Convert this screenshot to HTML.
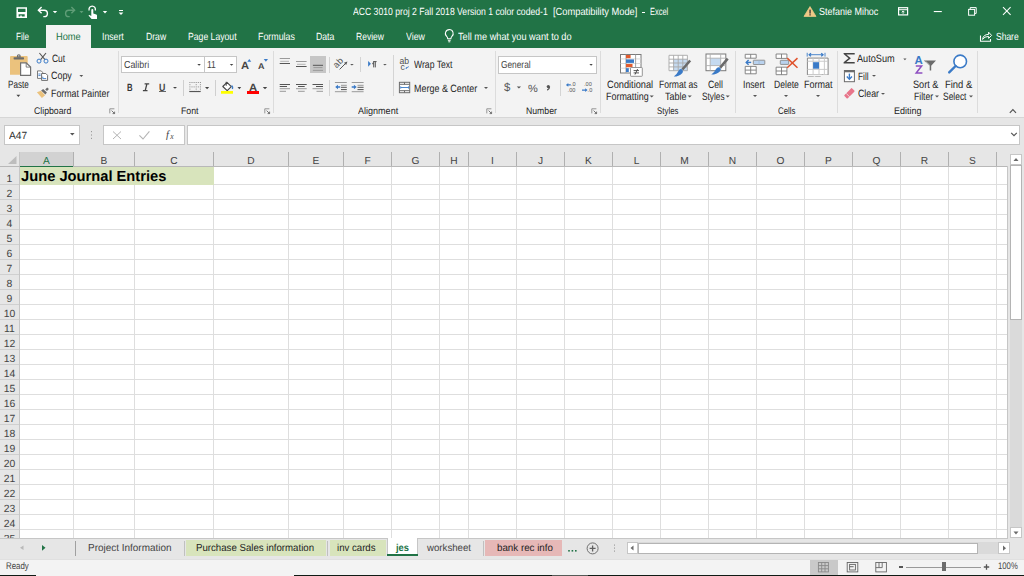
<!DOCTYPE html><html><head><meta charset="utf-8"><style>
html,body{margin:0;padding:0;width:1024px;height:576px;overflow:hidden;background:#e6e6e6;position:relative}
.t{position:absolute;white-space:nowrap;font-family:"Liberation Sans", sans-serif;transform-origin:0 0;text-rendering:geometricPrecision}
</style></head><body>
<div style="position:absolute;left:0px;top:0px;width:1024px;height:48px;background:#217346"></div>
<div style="position:absolute;left:46px;top:25px;width:45px;height:23px;background:#f3f3f3"></div>
<div style="position:absolute;left:0px;top:48px;width:1024px;height:69px;background:#f3f3f3"></div>
<div style="position:absolute;left:0px;top:117px;width:1024px;height:1px;background:#d6d6d6"></div>
<div style="position:absolute;left:0px;top:118px;width:1024px;height:34px;background:#e6e6e6"></div>
<div style="position:absolute;left:642px;top:12px;width:3px;height:1px;background:#fff"></div>
<div style="position:absolute;left:4px;top:125px;width:76px;height:20px;background:#fff;box-sizing:border-box;border:1px solid #c6c6c6"></div>
<div style="position:absolute;left:103px;top:125px;width:82px;height:20px;background:#fff;box-sizing:border-box;border:1px solid #c6c6c6"></div>
<div style="position:absolute;left:187px;top:125px;width:833px;height:20px;background:#fff;box-sizing:border-box;border:1px solid #c6c6c6"></div>
<div style="position:absolute;left:20px;top:167px;width:988px;height:371px;background:#fff"></div>
<div style="position:absolute;left:73px;top:167px;width:1px;height:371px;background:#dedede"></div>
<div style="position:absolute;left:134px;top:167px;width:1px;height:371px;background:#dedede"></div>
<div style="position:absolute;left:213px;top:167px;width:1px;height:371px;background:#dedede"></div>
<div style="position:absolute;left:288px;top:167px;width:1px;height:371px;background:#dedede"></div>
<div style="position:absolute;left:343px;top:167px;width:1px;height:371px;background:#dedede"></div>
<div style="position:absolute;left:391px;top:167px;width:1px;height:371px;background:#dedede"></div>
<div style="position:absolute;left:439px;top:167px;width:1px;height:371px;background:#dedede"></div>
<div style="position:absolute;left:468px;top:167px;width:1px;height:371px;background:#dedede"></div>
<div style="position:absolute;left:516px;top:167px;width:1px;height:371px;background:#dedede"></div>
<div style="position:absolute;left:564px;top:167px;width:1px;height:371px;background:#dedede"></div>
<div style="position:absolute;left:612px;top:167px;width:1px;height:371px;background:#dedede"></div>
<div style="position:absolute;left:660px;top:167px;width:1px;height:371px;background:#dedede"></div>
<div style="position:absolute;left:708px;top:167px;width:1px;height:371px;background:#dedede"></div>
<div style="position:absolute;left:756px;top:167px;width:1px;height:371px;background:#dedede"></div>
<div style="position:absolute;left:804px;top:167px;width:1px;height:371px;background:#dedede"></div>
<div style="position:absolute;left:852px;top:167px;width:1px;height:371px;background:#dedede"></div>
<div style="position:absolute;left:900px;top:167px;width:1px;height:371px;background:#dedede"></div>
<div style="position:absolute;left:948px;top:167px;width:1px;height:371px;background:#dedede"></div>
<div style="position:absolute;left:996px;top:167px;width:1px;height:371px;background:#dedede"></div>
<div style="position:absolute;left:20px;top:184px;width:988px;height:1px;background:#dedede"></div>
<div style="position:absolute;left:0px;top:184px;width:19px;height:1px;background:#d0d0d0"></div>
<div style="position:absolute;left:20px;top:199px;width:988px;height:1px;background:#dedede"></div>
<div style="position:absolute;left:0px;top:199px;width:19px;height:1px;background:#d0d0d0"></div>
<div style="position:absolute;left:20px;top:214px;width:988px;height:1px;background:#dedede"></div>
<div style="position:absolute;left:0px;top:214px;width:19px;height:1px;background:#d0d0d0"></div>
<div style="position:absolute;left:20px;top:229px;width:988px;height:1px;background:#dedede"></div>
<div style="position:absolute;left:0px;top:229px;width:19px;height:1px;background:#d0d0d0"></div>
<div style="position:absolute;left:20px;top:244px;width:988px;height:1px;background:#dedede"></div>
<div style="position:absolute;left:0px;top:244px;width:19px;height:1px;background:#d0d0d0"></div>
<div style="position:absolute;left:20px;top:259px;width:988px;height:1px;background:#dedede"></div>
<div style="position:absolute;left:0px;top:259px;width:19px;height:1px;background:#d0d0d0"></div>
<div style="position:absolute;left:20px;top:274px;width:988px;height:1px;background:#dedede"></div>
<div style="position:absolute;left:0px;top:274px;width:19px;height:1px;background:#d0d0d0"></div>
<div style="position:absolute;left:20px;top:289px;width:988px;height:1px;background:#dedede"></div>
<div style="position:absolute;left:0px;top:289px;width:19px;height:1px;background:#d0d0d0"></div>
<div style="position:absolute;left:20px;top:304px;width:988px;height:1px;background:#dedede"></div>
<div style="position:absolute;left:0px;top:304px;width:19px;height:1px;background:#d0d0d0"></div>
<div style="position:absolute;left:20px;top:319px;width:988px;height:1px;background:#dedede"></div>
<div style="position:absolute;left:0px;top:319px;width:19px;height:1px;background:#d0d0d0"></div>
<div style="position:absolute;left:20px;top:334px;width:988px;height:1px;background:#dedede"></div>
<div style="position:absolute;left:0px;top:334px;width:19px;height:1px;background:#d0d0d0"></div>
<div style="position:absolute;left:20px;top:349px;width:988px;height:1px;background:#dedede"></div>
<div style="position:absolute;left:0px;top:349px;width:19px;height:1px;background:#d0d0d0"></div>
<div style="position:absolute;left:20px;top:364px;width:988px;height:1px;background:#dedede"></div>
<div style="position:absolute;left:0px;top:364px;width:19px;height:1px;background:#d0d0d0"></div>
<div style="position:absolute;left:20px;top:379px;width:988px;height:1px;background:#dedede"></div>
<div style="position:absolute;left:0px;top:379px;width:19px;height:1px;background:#d0d0d0"></div>
<div style="position:absolute;left:20px;top:394px;width:988px;height:1px;background:#dedede"></div>
<div style="position:absolute;left:0px;top:394px;width:19px;height:1px;background:#d0d0d0"></div>
<div style="position:absolute;left:20px;top:409px;width:988px;height:1px;background:#dedede"></div>
<div style="position:absolute;left:0px;top:409px;width:19px;height:1px;background:#d0d0d0"></div>
<div style="position:absolute;left:20px;top:424px;width:988px;height:1px;background:#dedede"></div>
<div style="position:absolute;left:0px;top:424px;width:19px;height:1px;background:#d0d0d0"></div>
<div style="position:absolute;left:20px;top:439px;width:988px;height:1px;background:#dedede"></div>
<div style="position:absolute;left:0px;top:439px;width:19px;height:1px;background:#d0d0d0"></div>
<div style="position:absolute;left:20px;top:454px;width:988px;height:1px;background:#dedede"></div>
<div style="position:absolute;left:0px;top:454px;width:19px;height:1px;background:#d0d0d0"></div>
<div style="position:absolute;left:20px;top:469px;width:988px;height:1px;background:#dedede"></div>
<div style="position:absolute;left:0px;top:469px;width:19px;height:1px;background:#d0d0d0"></div>
<div style="position:absolute;left:20px;top:484px;width:988px;height:1px;background:#dedede"></div>
<div style="position:absolute;left:0px;top:484px;width:19px;height:1px;background:#d0d0d0"></div>
<div style="position:absolute;left:20px;top:499px;width:988px;height:1px;background:#dedede"></div>
<div style="position:absolute;left:0px;top:499px;width:19px;height:1px;background:#d0d0d0"></div>
<div style="position:absolute;left:20px;top:514px;width:988px;height:1px;background:#dedede"></div>
<div style="position:absolute;left:0px;top:514px;width:19px;height:1px;background:#d0d0d0"></div>
<div style="position:absolute;left:20px;top:529px;width:988px;height:1px;background:#dedede"></div>
<div style="position:absolute;left:0px;top:529px;width:19px;height:1px;background:#d0d0d0"></div>
<div style="position:absolute;left:19px;top:152px;width:1px;height:386px;background:#c6c6c6"></div>
<div style="position:absolute;left:0px;top:166px;width:1008px;height:1px;background:#b8b8b8"></div>
<div style="position:absolute;left:20px;top:152px;width:53px;height:14px;background:#d2d2d2"></div>
<div style="position:absolute;left:20px;top:166px;width:53px;height:1px;background:#217346"></div>
<div style="position:absolute;left:73px;top:152px;width:1px;height:14px;background:#b0b0b0"></div>
<div style="position:absolute;left:134px;top:152px;width:1px;height:14px;background:#b0b0b0"></div>
<div style="position:absolute;left:213px;top:152px;width:1px;height:14px;background:#b0b0b0"></div>
<div style="position:absolute;left:288px;top:152px;width:1px;height:14px;background:#b0b0b0"></div>
<div style="position:absolute;left:343px;top:152px;width:1px;height:14px;background:#b0b0b0"></div>
<div style="position:absolute;left:391px;top:152px;width:1px;height:14px;background:#b0b0b0"></div>
<div style="position:absolute;left:439px;top:152px;width:1px;height:14px;background:#b0b0b0"></div>
<div style="position:absolute;left:468px;top:152px;width:1px;height:14px;background:#b0b0b0"></div>
<div style="position:absolute;left:516px;top:152px;width:1px;height:14px;background:#b0b0b0"></div>
<div style="position:absolute;left:564px;top:152px;width:1px;height:14px;background:#b0b0b0"></div>
<div style="position:absolute;left:612px;top:152px;width:1px;height:14px;background:#b0b0b0"></div>
<div style="position:absolute;left:660px;top:152px;width:1px;height:14px;background:#b0b0b0"></div>
<div style="position:absolute;left:708px;top:152px;width:1px;height:14px;background:#b0b0b0"></div>
<div style="position:absolute;left:756px;top:152px;width:1px;height:14px;background:#b0b0b0"></div>
<div style="position:absolute;left:804px;top:152px;width:1px;height:14px;background:#b0b0b0"></div>
<div style="position:absolute;left:852px;top:152px;width:1px;height:14px;background:#b0b0b0"></div>
<div style="position:absolute;left:900px;top:152px;width:1px;height:14px;background:#b0b0b0"></div>
<div style="position:absolute;left:948px;top:152px;width:1px;height:14px;background:#b0b0b0"></div>
<div style="position:absolute;left:996px;top:152px;width:1px;height:14px;background:#b0b0b0"></div>
<div style="position:absolute;left:20px;top:167px;width:194px;height:18px;background:#d8e4bc"></div>
<div style="position:absolute;left:1007px;top:166px;width:1px;height:373px;background:#c6c6c6"></div>
<div style="position:absolute;left:0px;top:538px;width:1008px;height:1px;background:#c6c6c6"></div>
<svg style="position:absolute;left:6px;top:154px;" width="12" height="12" viewBox="0 0 12 12"><polygon points="2,10 10.5,10 10.5,2" fill="#bdbdbd"/></svg>
<div style="position:absolute;left:1008px;top:152px;width:16px;height:387px;background:#e6e6e6"></div>
<div style="position:absolute;left:1010px;top:154px;width:12px;height:384px;background:#dadada"></div>
<div style="position:absolute;left:1010px;top:154px;width:12px;height:11px;background:#fff;box-sizing:border-box;border:1px solid #c6c6c6"></div>
<svg style="position:absolute;left:1010px;top:154px;" width="12" height="11" viewBox="0 0 12 11"><polygon points="3.5,7 8.5,7 6,4" fill="#6a6a6a"/></svg>
<div style="position:absolute;left:1010px;top:165px;width:12px;height:155px;background:#fff;box-sizing:border-box;border:1px solid #b4b4b4"></div>
<div style="position:absolute;left:1010px;top:527px;width:12px;height:11px;background:#fff;box-sizing:border-box;border:1px solid #c6c6c6"></div>
<svg style="position:absolute;left:1010px;top:527px;" width="12" height="11" viewBox="0 0 12 11"><polygon points="3.5,4.5 8.5,4.5 6,7.5" fill="#6a6a6a"/></svg>
<div style="position:absolute;left:0px;top:539px;width:1024px;height:20px;background:#e6e6e6"></div>
<svg style="position:absolute;left:18px;top:543px;" width="30" height="10" viewBox="0 0 30 10"><polygon points="5.5,2.5 5.5,7 2,4.75" fill="#b9b9b9"/><polygon points="24,2 24,7.7 27.5,4.85" fill="#217346"/></svg>
<div style="position:absolute;left:75px;top:541px;width:1px;height:15px;background:#a0a0a0"></div>
<div style="position:absolute;left:184px;top:541px;width:1px;height:15px;background:#c0c0c0"></div>
<div style="position:absolute;left:186px;top:540px;width:140px;height:16px;background:#d8e4bc"></div>
<div style="position:absolute;left:327px;top:541px;width:1px;height:15px;background:#c0c0c0"></div>
<div style="position:absolute;left:330px;top:540px;width:56px;height:16px;background:#d8e4bc"></div>
<div style="position:absolute;left:387px;top:538px;width:31px;height:18px;background:#fff;box-sizing:border-box;border-left:1px solid #c6c6c6;border-right:1px solid #c6c6c6"></div>
<div style="position:absolute;left:387px;top:554px;width:31px;height:2px;background:#217346"></div>
<div style="position:absolute;left:483px;top:541px;width:1px;height:15px;background:#c0c0c0"></div>
<div style="position:absolute;left:485px;top:540px;width:77px;height:16px;background:#e6b8b7"></div>
<svg style="position:absolute;left:566px;top:547px;" width="14" height="6" viewBox="0 0 14 6"><rect x="2.2" y="3" width="1.6" height="1.6" fill="#217346"/><rect x="5.6" y="3" width="1.6" height="1.6" fill="#217346"/><rect x="9" y="3" width="1.6" height="1.6" fill="#217346"/></svg>
<svg style="position:absolute;left:585px;top:541px;" width="15" height="15" viewBox="0 0 15 15"><circle cx="7.6" cy="7.4" r="5.5" fill="none" stroke="#707070" stroke-width="1"/><path d="M7.6 4.4v6M4.6 7.4h6" stroke="#606060" stroke-width="1.3"/></svg>
<svg style="position:absolute;left:612px;top:543px;" width="5" height="10" viewBox="0 0 5 10"><rect x="2" y="1.5" width="1" height="1.2" fill="#9a9a9a"/><rect x="2" y="4.5" width="1" height="1.2" fill="#9a9a9a"/><rect x="2" y="7.5" width="1" height="1.2" fill="#9a9a9a"/></svg>
<div style="position:absolute;left:627px;top:542px;width:383px;height:12px;background:#dadada"></div>
<div style="position:absolute;left:627px;top:542px;width:11px;height:12px;background:#fff;box-sizing:border-box;border:1px solid #c6c6c6"></div>
<svg style="position:absolute;left:627px;top:542px;" width="11" height="12" viewBox="0 0 11 12"><polygon points="6.5,3.5 6.5,8.5 3.5,6" fill="#6a6a6a"/></svg>
<div style="position:absolute;left:638px;top:543px;width:340px;height:11px;background:#fff;box-sizing:border-box;border:1px solid #b4b4b4"></div>
<div style="position:absolute;left:998px;top:542px;width:12px;height:12px;background:#fff;box-sizing:border-box;border:1px solid #c6c6c6"></div>
<svg style="position:absolute;left:998px;top:542px;" width="12" height="12" viewBox="0 0 12 12"><polygon points="5,3.5 5,8.8 8,6.15" fill="#6a6a6a"/></svg>
<div style="position:absolute;left:0px;top:559px;width:1024px;height:17px;background:#f3f3f3"></div>
<div style="position:absolute;left:0px;top:559px;width:1024px;height:1px;background:#e0e0e0"></div>
<div style="position:absolute;left:810px;top:560px;width:28px;height:15px;background:#c9c9c9"></div>
<div style="position:absolute;left:0px;top:575px;width:36px;height:1px;background:#0f1a14"></div>
<div style="position:absolute;left:294px;top:575px;width:730px;height:1px;background:#0f1a14"></div>
<div style="position:absolute;left:552px;top:575px;width:36px;height:1px;background:#555a56"></div>
<svg style="position:absolute;left:14px;top:5px;" width="16" height="16" viewBox="0 0 16 16"><path fill-rule="evenodd" fill="#fff" d="M2.45 2.2 H13 V13 H2.45 Z M4 3.7 V7.1 H11.5 V3.7 Z M4.6 9.25 V11.6 H6.2 V10.6 H7.8 V11.6 H10.7 V9.25 Z"/></svg>
<svg style="position:absolute;left:36px;top:5px;" width="16" height="14" viewBox="0 0 16 14"><path d="M2.6 5.2 H8.2 A3.2 3.2 0 0 1 8.2 11.6 H7.3" fill="none" stroke="#fff" stroke-width="1.4"/><path d="M5.6 2.1 L2.4 5.2 L5.6 8.3" fill="none" stroke="#fff" stroke-width="1.4"/></svg>
<svg style="position:absolute;left:52px;top:10px;" width="6" height="4" viewBox="0 0 6 4"><polygon points="0.8,1 5.2,1 3,3.2" fill="#fff"/></svg>
<svg style="position:absolute;left:63px;top:5px;" width="16" height="14" viewBox="0 0 16 14"><path d="M11.4 5.2 H5.8 A3.2 3.2 0 0 0 5.8 11.6 H6.7" fill="none" stroke="#5f9d77" stroke-width="1.4"/><path d="M8.4 2.1 L11.6 5.2 L8.4 8.3" fill="none" stroke="#5f9d77" stroke-width="1.4"/></svg>
<svg style="position:absolute;left:79px;top:10px;" width="6" height="4" viewBox="0 0 6 4"><polygon points="0.5,1 4.5,1 2.5,3.2" fill="#5f9d77"/></svg>
<svg style="position:absolute;left:86px;top:5px;" width="14" height="16" viewBox="0 0 14 16"><path d="M3.2 5.4 A3.2 3.2 0 1 1 9.2 5.4" fill="none" stroke="#fff" stroke-width="1.3"/><path d="M5.3 5 Q5.3 3.9 6.3 3.9 Q7.3 3.9 7.3 5 V8.6 L10.3 9.6 Q11.2 10 11 11 V14 H5.6 L2.5 10.6 Q2.6 9.8 3.5 10 L5.3 11 Z" fill="#fff"/></svg>
<svg style="position:absolute;left:102px;top:10px;" width="6" height="4" viewBox="0 0 6 4"><polygon points="0.8,1 5.2,1 3,3.4" fill="#fff"/></svg>
<svg style="position:absolute;left:117px;top:8px;" width="8" height="8" viewBox="0 0 8 8"><rect x="2" y="2" width="4" height="1" fill="#fff"/><polygon points="1.6,4.6 6.4,4.6 4,7" fill="#fff"/></svg>
<svg style="position:absolute;left:802px;top:5px;" width="16" height="13" viewBox="0 0 16 13"><polygon points="8,1.6 14,11.4 2,11.4" fill="#f0c987" stroke="#f0c987" stroke-width="0.8" stroke-linejoin="round"/><rect x="7.4" y="4.6" width="1.3" height="4" fill="#333"/><rect x="7.4" y="9.2" width="1.3" height="1.3" fill="#333"/></svg>
<svg style="position:absolute;left:896px;top:5px;" width="14" height="12" viewBox="0 0 14 12"><rect x="2.6" y="2.7" width="9" height="7.2" fill="none" stroke="#fff" stroke-width="1.2"/><rect x="2.6" y="4.2" width="9" height="1" fill="#fff"/><path d="M7.1 8.8 V6 M5.7 7.3 L7.1 5.9 L8.5 7.3" stroke="#fff" stroke-width="0.9" fill="none"/></svg>
<svg style="position:absolute;left:932px;top:9px;" width="12" height="5" viewBox="0 0 12 5"><rect x="1.8" y="2" width="8" height="1.1" fill="#fff"/></svg>
<svg style="position:absolute;left:966px;top:5px;" width="12" height="12" viewBox="0 0 12 12"><rect x="2.6" y="4.4" width="6" height="5.8" fill="none" stroke="#fff" stroke-width="1"/><path d="M4.2 4.4 V2.6 H10.2 V8.4 H8.6" fill="none" stroke="#fff" stroke-width="1"/></svg>
<svg style="position:absolute;left:1001px;top:5px;" width="12" height="12" viewBox="0 0 12 12"><path d="M2 2.2 L9.6 9.8 M9.6 2.2 L2 9.8" stroke="#fff" stroke-width="1.05"/></svg>
<svg style="position:absolute;left:978px;top:29px;" width="16" height="14" viewBox="0 0 16 14"><path d="M2.5 6.5 V12.2 H12.5 V10" fill="none" stroke="#fff" stroke-width="1.1"/><path d="M4.6 10.4 Q5.2 5.4 10.6 5.4 V3.2 L13.6 6.4 L10.6 9.4 V7.4 Q6.4 7.4 4.6 10.4 Z" fill="none" stroke="#fff" stroke-width="1"/></svg>
<svg style="position:absolute;left:443px;top:28px;" width="13" height="16" viewBox="0 0 13 16"><path d="M6.3 1.6 A3.9 3.9 0 0 0 3.7 8.4 Q4.6 9.3 4.7 10.7 H7.9 Q8 9.3 8.9 8.4 A3.9 3.9 0 0 0 6.3 1.6 Z" fill="none" stroke="#fff" stroke-width="1.05"/><path d="M4.9 12.3 H7.7 M5.3 13.8 H7.3" stroke="#fff" stroke-width="1"/></svg>
<svg style="position:absolute;left:8px;top:52px;" width="26" height="26" viewBox="0 0 26 26"><path d="M2 5.1 Q2 4.1 3 4.1 H18.7 Q19.7 4.1 19.7 5.1 V22.7 H2 Z" fill="#ebc27d"/><rect x="5.6" y="5.2" width="10.4" height="2.2" rx="0.6" fill="#6b6b6b"/><path d="M8.9 5.6 V4 Q8.9 2.2 10.8 2.2 Q12.7 2.2 12.7 4 V5.6 Z" fill="#6b6b6b"/><rect x="10.3" y="3.3" width="1" height="1.1" fill="#f3f3f3"/><path d="M12.6 10.8 H18.2 L22.6 15.1 V23.4 H12.6 Z" fill="#fff" stroke="#707070" stroke-width="1.2"/><path d="M18.2 10.8 V15.1 H22.6" fill="none" stroke="#707070" stroke-width="0.9"/></svg>
<svg style="position:absolute;left:14px;top:93px;" width="8" height="6" viewBox="0 0 8 6"><polygon points="2.4,1.7 6.3,1.7 4.35,4" fill="#444"/></svg>
<svg style="position:absolute;left:35px;top:51px;" width="14" height="14" viewBox="0 0 14 14"><path d="M4.4 2 L10 8.6 M11 2 L5.7 8.6" stroke="#555" stroke-width="1.1"/><circle cx="4" cy="10.1" r="2" fill="none" stroke="#3a7ac7" stroke-width="1"/><circle cx="11" cy="10.1" r="2" fill="none" stroke="#3a7ac7" stroke-width="1"/></svg>
<svg style="position:absolute;left:35px;top:68px;" width="15" height="15" viewBox="0 0 15 15"><path d="M2.5 2.9 H6.2 L7.6 4.3 V10.4 H2.5 Z" fill="#fff" stroke="#6d6d6d" stroke-width="0.9"/><path d="M3.4 6 H5.6 M3.4 7.6 H5.6" stroke="#3a7ac7" stroke-width="0.9"/><path d="M6.6 5.5 H10.8 L12.6 7.3 V12.4 H6.6 Z" fill="#fff" stroke="#6d6d6d" stroke-width="1"/><path d="M7.8 8.7 V10.6 H11.2" fill="none" stroke="#3a7ac7" stroke-width="0.9"/></svg>
<svg style="position:absolute;left:35px;top:86px;" width="16" height="14" viewBox="0 0 16 14"><polygon points="1.9,6.3 5.9,4.7 10.1,9.2 6.9,11.9" fill="#ebc27d"/><polygon points="6.1,4.4 8.2,3 11.9,6.6 10.4,8.6" fill="#6b6b6b"/><polygon points="10.2,3.4 12.2,1.6 13.9,3 12,5" fill="#6b6b6b"/></svg>
<svg style="position:absolute;left:79px;top:73px;" width="6" height="5" viewBox="0 0 6 5"><polygon points="0.4,1.9 4.2,1.9 2.3,4" fill="#555"/></svg>
<svg style="position:absolute;left:109px;top:108px;" width="7" height="7" viewBox="0 0 7 7"><path d="M0.8 5.4 V0.8 H5.4" fill="none" stroke="#8a8a8a" stroke-width="0.9"/><path d="M2.6 2.6 L5.6 5.6 M3.6 5.6 H5.6 V3.6" fill="none" stroke="#666" stroke-width="0.9"/></svg>
<svg style="position:absolute;left:264px;top:108px;" width="7" height="7" viewBox="0 0 7 7"><path d="M0.8 5.4 V0.8 H5.4" fill="none" stroke="#8a8a8a" stroke-width="0.9"/><path d="M2.6 2.6 L5.6 5.6 M3.6 5.6 H5.6 V3.6" fill="none" stroke="#666" stroke-width="0.9"/></svg>
<svg style="position:absolute;left:486px;top:108px;" width="7" height="7" viewBox="0 0 7 7"><path d="M0.8 5.4 V0.8 H5.4" fill="none" stroke="#8a8a8a" stroke-width="0.9"/><path d="M2.6 2.6 L5.6 5.6 M3.6 5.6 H5.6 V3.6" fill="none" stroke="#666" stroke-width="0.9"/></svg>
<svg style="position:absolute;left:591px;top:108px;" width="7" height="7" viewBox="0 0 7 7"><path d="M0.8 5.4 V0.8 H5.4" fill="none" stroke="#8a8a8a" stroke-width="0.9"/><path d="M2.6 2.6 L5.6 5.6 M3.6 5.6 H5.6 V3.6" fill="none" stroke="#666" stroke-width="0.9"/></svg>
<div style="position:absolute;left:118px;top:51px;width:1px;height:62px;background:#dcdcdc"></div>
<div style="position:absolute;left:273px;top:51px;width:1px;height:62px;background:#dcdcdc"></div>
<div style="position:absolute;left:495px;top:51px;width:1px;height:62px;background:#dcdcdc"></div>
<div style="position:absolute;left:600px;top:51px;width:1px;height:62px;background:#dcdcdc"></div>
<div style="position:absolute;left:735px;top:51px;width:1px;height:62px;background:#dcdcdc"></div>
<div style="position:absolute;left:837px;top:51px;width:1px;height:62px;background:#dcdcdc"></div>
<div style="position:absolute;left:977px;top:51px;width:1px;height:62px;background:#dcdcdc"></div>
<div style="position:absolute;left:121px;top:56px;width:84px;height:17px;background:#fff;box-sizing:border-box;border:1px solid #c6c6c6"></div>
<div style="position:absolute;left:204px;top:56px;width:33px;height:17px;background:#fff;box-sizing:border-box;border:1px solid #c6c6c6"></div>
<svg style="position:absolute;left:196px;top:62px;" width="6" height="5" viewBox="0 0 6 5"><polygon points="1.3,2 4.9,2 3.1,3.8" fill="#444"/></svg>
<svg style="position:absolute;left:229px;top:62px;" width="6" height="5" viewBox="0 0 6 5"><polygon points="0.8,2 4.3,2 2.55,3.8" fill="#444"/></svg>
<svg style="position:absolute;left:245px;top:57px;" width="8" height="6" viewBox="0 0 8 6"><polygon points="2.3,4.7 6.25,4.7 4.3,2" fill="#3a7ac7"/></svg>
<svg style="position:absolute;left:262px;top:57px;" width="8" height="6" viewBox="0 0 8 6"><polygon points="1.75,2 6,2 3.9,4.7" fill="#3a7ac7"/></svg>
<svg style="position:absolute;left:141px;top:81px;" width="10" height="12" viewBox="0 0 10 12"><path d="M3.6 2.9 H8.2 M1.9 9.7 H6.5 M5.9 2.9 L4.2 9.7" stroke="#444" stroke-width="1.3" fill="none"/></svg>
<div style="position:absolute;left:159px;top:91px;width:7px;height:1px;background:#666"></div>
<svg style="position:absolute;left:171px;top:85px;" width="8" height="5" viewBox="0 0 8 5"><polygon points="2,2 6,2 4,3.8" fill="#444"/></svg>
<div style="position:absolute;left:183px;top:80px;width:1px;height:16px;background:#cfcfcf"></div>
<svg style="position:absolute;left:188px;top:80px;" width="14" height="14" viewBox="0 0 14 14"><g fill="#8a8a8a"><rect x="1.4" y="2.0" width="1" height="1"/><rect x="1.4" y="4.2" width="1" height="1"/><rect x="1.4" y="6.4" width="1" height="1"/><rect x="1.4" y="8.6" width="1" height="1"/><rect x="1.4" y="10.8" width="1" height="1"/><rect x="3.5" y="2.0" width="1" height="1"/><rect x="3.5" y="6.4" width="1" height="1"/><rect x="3.5" y="10.8" width="1" height="1"/><rect x="5.6" y="2.0" width="1" height="1"/><rect x="5.6" y="6.4" width="1" height="1"/><rect x="5.6" y="10.8" width="1" height="1"/><rect x="7.7" y="2.0" width="1" height="1"/><rect x="7.7" y="4.2" width="1" height="1"/><rect x="7.7" y="6.4" width="1" height="1"/><rect x="7.7" y="8.6" width="1" height="1"/><rect x="7.7" y="10.8" width="1" height="1"/><rect x="9.8" y="2.0" width="1" height="1"/><rect x="9.8" y="6.4" width="1" height="1"/><rect x="9.8" y="10.8" width="1" height="1"/><rect x="11.9" y="2.0" width="1" height="1"/><rect x="11.9" y="4.2" width="1" height="1"/><rect x="11.9" y="6.4" width="1" height="1"/><rect x="11.9" y="8.6" width="1" height="1"/><rect x="11.9" y="10.8" width="1" height="1"/></g><rect x="1.4" y="11" width="11" height="1.1" fill="#555"/></svg>
<svg style="position:absolute;left:203px;top:85px;" width="8" height="5" viewBox="0 0 8 5"><polygon points="2,2 6.2,2 4.1,4.2" fill="#444"/></svg>
<div style="position:absolute;left:215px;top:80px;width:1px;height:16px;background:#cfcfcf"></div>
<svg style="position:absolute;left:219px;top:80px;" width="16" height="15" viewBox="0 0 16 15"><path d="M3.8 6.5 L8 2.3 L12.3 6.6 L8.2 10.6 Z" fill="#fff" stroke="#444" stroke-width="1.1" stroke-linejoin="round"/><path d="M7.2 1.8 V5.8" stroke="#444" stroke-width="1"/><path d="M12.6 5.4 Q14.3 7 13.4 9" fill="none" stroke="#3a7ac7" stroke-width="1.4"/><rect x="2" y="11" width="12" height="2.75" fill="#ffff00"/></svg>
<svg style="position:absolute;left:236px;top:85px;" width="8" height="5" viewBox="0 0 8 5"><polygon points="1.5,2 5.2,2 3.35,4.2" fill="#444"/></svg>
<div style="position:absolute;left:247px;top:91px;width:12px;height:3px;background:#ff0000"></div>
<svg style="position:absolute;left:261px;top:85px;" width="8" height="5" viewBox="0 0 8 5"><polygon points="1.8,2 6.2,2 4,4.2" fill="#444"/></svg>
<div style="position:absolute;left:310px;top:56px;width:16px;height:17px;background:#c6c6c6"></div>
<svg style="position:absolute;left:276px;top:54px;" width="54" height="22" viewBox="0 0 54 22"><rect x="3.7" y="4" width="10.3" height="1" fill="#9a9a9a"/><rect x="4.2" y="6.8" width="8.8" height="1" fill="#b4b4b4"/><rect x="3.7" y="9" width="10.3" height="1" fill="#555"/><rect x="20" y="7" width="10.600000000000001" height="1" fill="#9a9a9a"/><rect x="21" y="9.8" width="8.600000000000001" height="1" fill="#b4b4b4"/><rect x="20" y="12" width="10.600000000000001" height="1" fill="#555"/><rect x="36.9" y="10.8" width="10.100000000000001" height="1" fill="#555"/><rect x="37.4" y="13.1" width="9.100000000000001" height="1" fill="#9a9a9a"/><rect x="36.9" y="15.85" width="10.100000000000001" height="1" fill="#9a9a9a"/></svg>
<svg style="position:absolute;left:333px;top:56px;" width="16" height="16" viewBox="0 0 16 16"><text x="0" y="0" font-family="Liberation Sans" font-size="9" fill="#505050" transform="translate(3.6,12.4) rotate(-45)">ab</text><path d="M6.6 13.4 L13.2 6.8" stroke="#555" stroke-width="1"/><polygon points="14.4,5.6 11,6.8 13.2,9" fill="#555"/></svg>
<svg style="position:absolute;left:349px;top:62px;" width="6" height="5" viewBox="0 0 6 5"><polygon points="1.1,1.9 4.75,1.9 2.9,3.6" fill="#555"/></svg>
<div style="position:absolute;left:360px;top:57px;width:1px;height:15px;background:#d4d4d4"></div>
<svg style="position:absolute;left:366px;top:59px;" width="12" height="10" viewBox="0 0 12 10"><polygon points="2.1,1.9 4.9,4.85 2.1,7.8" fill="#3a7ac7"/><path d="M7.7 3.4 Q6.2 3.4 6.2 4.5 Q6.2 5.6 7.7 5.6 Z" fill="#555"/><path d="M7.7 2.6 V8.4 M9.3 2.6 V8.4 M7.2 2.6 H10.6" stroke="#555" stroke-width="1"/></svg>
<svg style="position:absolute;left:382px;top:62px;" width="6" height="5" viewBox="0 0 6 5"><polygon points="1.1,1.9 4.75,1.9 2.9,3.6" fill="#555"/></svg>
<div style="position:absolute;left:393px;top:55px;width:1px;height:41px;background:#d4d4d4"></div>
<svg style="position:absolute;left:276px;top:78px;" width="92" height="20" viewBox="0 0 92 20"><rect x="3.7" y="6" width="10.3" height="1" fill="#555"/><rect x="3.7" y="8" width="7.3" height="1" fill="#555"/><rect x="3.7" y="10.2" width="10.3" height="1" fill="#9a9a9a"/><rect x="3.7" y="12.8" width="6.3" height="1" fill="#9a9a9a"/><rect x="20" y="6" width="10.7" height="1" fill="#555"/><rect x="22" y="8" width="6.699999999999999" height="1" fill="#555"/><rect x="20" y="10.2" width="10.7" height="1" fill="#9a9a9a"/><rect x="22" y="12.8" width="6.699999999999999" height="1" fill="#9a9a9a"/><rect x="36.5" y="6" width="10.5" height="1" fill="#555"/><rect x="40" y="8" width="7" height="1" fill="#555"/><rect x="36.5" y="10.2" width="10.5" height="1" fill="#9a9a9a"/><rect x="40.5" y="12.8" width="6.5" height="1" fill="#9a9a9a"/><rect x="58.9" y="4" width="11.899999999999999" height="1" fill="#9a9a9a"/><rect x="65" y="6.8" width="5.799999999999997" height="1" fill="#9a9a9a"/><rect x="65" y="8.8" width="5.799999999999997" height="1" fill="#555"/><rect x="65" y="11.1" width="5.799999999999997" height="1" fill="#555"/><rect x="58.9" y="13.2" width="11.899999999999999" height="1" fill="#9a9a9a"/><polygon points="59.2,9 62,6.8 62,8.3 64.2,8.3 64.2,9.8 62,9.8 62,11.2" fill="#3a7ac7"/><rect x="75.7" y="4" width="11.899999999999991" height="1" fill="#9a9a9a"/><rect x="81.5" y="6.8" width="6.099999999999994" height="1" fill="#9a9a9a"/><rect x="81.5" y="8.8" width="6.099999999999994" height="1" fill="#555"/><rect x="81.5" y="11.1" width="6.099999999999994" height="1" fill="#555"/><rect x="75.7" y="13.2" width="11.899999999999991" height="1" fill="#9a9a9a"/><polygon points="80.7,9 77.9,6.8 77.9,8.3 75.7,8.3 75.7,9.8 77.9,9.8 77.9,11.2" fill="#3a7ac7"/></svg>
<div style="position:absolute;left:329px;top:80px;width:1px;height:16px;background:#d4d4d4"></div>
<div style="position:absolute;left:329px;top:57px;width:1px;height:16px;background:#d4d4d4"></div>
<svg style="position:absolute;left:397px;top:56px;" width="14" height="16" viewBox="0 0 14 16"><text x="2.4" y="8.3" font-family="Liberation Sans" font-size="8.6" fill="#505050" textLength="9.6" lengthAdjust="spacingAndGlyphs">ab</text><text x="3.6" y="13.5" font-family="Liberation Sans" font-size="8.6" fill="#505050">c</text><path d="M9 12.2 L11.8 10.6" stroke="#3a7ac7" stroke-width="0.9"/><polygon points="8.4,12.8 9.2,11 10.2,12.4" fill="#3a7ac7"/></svg>
<svg style="position:absolute;left:398px;top:81px;" width="13" height="13" viewBox="0 0 13 13"><rect x="1.4" y="1.3" width="10.3" height="10.4" fill="#fff" stroke="#6b6b6b" stroke-width="1"/><path d="M1.4 3.3 H11.7 M1.4 9.7 H11.7 M6.5 1.3 V3.3 M6.5 9.7 V11.7" stroke="#6b6b6b" stroke-width="1"/><path d="M3 6.5 H10.2" stroke="#3a7ac7" stroke-width="0.9"/><path d="M2.7 5.4 V7.6 M10.5 5.4 V7.6" stroke="#3a7ac7" stroke-width="0.9"/></svg>
<svg style="position:absolute;left:483px;top:85px;" width="7" height="5" viewBox="0 0 7 5"><polygon points="1,2 5,2 3,4" fill="#555"/></svg>
<div style="position:absolute;left:498px;top:56px;width:99px;height:18px;background:#fff;box-sizing:border-box;border:1px solid #c6c6c6"></div>
<svg style="position:absolute;left:587px;top:62px;" width="7" height="5" viewBox="0 0 7 5"><polygon points="2.4,2 5.75,2 4.1,3.8" fill="#444"/></svg>
<svg style="position:absolute;left:515px;top:85px;" width="8" height="5" viewBox="0 0 8 5"><polygon points="1.8,1.6 6,1.6 3.9,3.5" fill="#555"/></svg>
<svg style="position:absolute;left:544px;top:83px;" width="8" height="9" viewBox="0 0 8 9"><circle cx="4.3" cy="3.6" r="1.6" fill="#555"/><path d="M5.6 3.8 Q5.6 6 3.2 7.1" stroke="#555" stroke-width="1.2" fill="none"/></svg>
<div style="position:absolute;left:560px;top:80px;width:1px;height:16px;background:#d4d4d4"></div>
<svg style="position:absolute;left:564px;top:81px;" width="32" height="13" viewBox="0 0 32 13"><polygon points="1.9,3.9 4.3,2.1 4.3,3.3 6.8,3.3 6.8,4.5 4.3,4.5 4.3,5.7" fill="#3a7ac7"/><text x="7" y="5.4" font-family="Liberation Sans" font-size="5.6" fill="#555">.0</text><text x="3.6" y="10.7" font-family="Liberation Sans" font-size="5.6" fill="#555">.00</text><text x="20" y="5.4" font-family="Liberation Sans" font-size="5.6" fill="#555">.00</text><polygon points="23.6,9.1 21.2,7.3 21.2,8.5 18,8.5 18,9.7 21.2,9.7 21.2,10.9" fill="#3a7ac7"/><text x="23.6" y="10.7" font-family="Liberation Sans" font-size="5.6" fill="#555">.0</text></svg>
<svg style="position:absolute;left:617px;top:52px;" width="28" height="27" viewBox="0 0 28 27"><rect x="3.5" y="2.5" width="20.5" height="18.5" fill="#fff" stroke="#7a7a7a" stroke-width="1"/><path d="M3.5 6.9 H24 M3.5 11.5 H24 M3.5 16.2 H24" stroke="#d0d0d0" stroke-width="0.8"/><path d="M9 2.5 V21 M18.6 2.5 V21" stroke="#9a9a9a" stroke-width="0.9"/><rect x="9" y="3" width="4.6" height="3.2" fill="#e15b2e"/><rect x="9" y="7.4" width="8" height="3.5" fill="#3a7ac7"/><rect x="9" y="12" width="6.5" height="3.2" fill="#e15b2e"/><rect x="9" y="16.2" width="2.8" height="3.8" fill="#3a7ac7"/><rect x="13.5" y="15.5" width="11.8" height="8.8" rx="0.6" fill="#fff" stroke="#8a8a8a" stroke-width="0.9"/><path d="M16.6 18.6 H22 M16.6 20.9 H22 M20.6 17 L18 22.6" stroke="#444" stroke-width="0.9"/></svg>
<svg style="position:absolute;left:666px;top:52px;" width="28" height="27" viewBox="0 0 28 27"><rect x="3" y="3.3" width="18.4" height="15.4" fill="#fff"/><rect x="7.6" y="7.2" width="13.8" height="11.5" fill="#c5daf0"/><path d="M3 3.3 H21.4 V18.7 H3 Z M3 7.2 H21.4 M3 11 H21.4 M3 14.9 H21.4 M7.6 3.3 V18.7 M12.2 3.3 V18.7 M16.8 3.3 V18.7" fill="none" stroke="#a8a8a8" stroke-width="0.9"/><path d="M24.2 8.5 L16.4 17.5" stroke="#6b6b6b" stroke-width="2.6"/><path d="M15.8 17.2 Q17.8 19 16.2 21.2 Q13 24.6 7.8 24.6 Q11 22.2 12.4 19 Q13.6 16.6 15.8 17.2 Z" fill="#3a7ac7"/></svg>
<svg style="position:absolute;left:704px;top:52px;" width="26" height="26" viewBox="0 0 26 26"><rect x="2" y="2" width="19.8" height="16.7" fill="#fff" stroke="#7a7a7a" stroke-width="1"/><rect x="6.2" y="6.2" width="10.5" height="7.4" fill="#c5daf0"/><path d="M2 6.2 H21.8 M2 13.6 H21.8 M6.2 2 V18.7 M16.7 2 V18.7" stroke="#b0b0b0" stroke-width="0.9"/><path d="M23.7 6.6 L16.2 15.6" stroke="#6b6b6b" stroke-width="2.6"/><path d="M15.6 15.3 Q17.6 17 16 19.2 Q12.8 22.6 7.3 22.6 Q10.6 20.2 12 17 Q13.4 14.6 15.6 15.3 Z" fill="#3a7ac7"/></svg>
<svg style="position:absolute;left:648px;top:94px;" width="8" height="5" viewBox="0 0 8 5"><polygon points="1.6,1.5 5.8,1.5 3.7,3.5" fill="#555"/></svg>
<svg style="position:absolute;left:686px;top:94px;" width="8" height="5" viewBox="0 0 8 5"><polygon points="1.6,1.5 5.8,1.5 3.7,3.5" fill="#555"/></svg>
<svg style="position:absolute;left:724px;top:94px;" width="8" height="5" viewBox="0 0 8 5"><polygon points="1.6,1.5 5.8,1.5 3.7,3.5" fill="#555"/></svg>
<svg style="position:absolute;left:743px;top:52px;" width="24" height="24" viewBox="0 0 24 24"><path d="M2.2 2.3 H13.2 V6.2 H2.2 Z M7.7 2.3 V6.2 M2.2 14.4 H13.2 V21.8 H2.2 Z M7.7 14.4 V21.8 M2.2 18.1 H13.2" fill="#fff" stroke="#7a7a7a" stroke-width="0.9"/><rect x="10.3" y="8.2" width="11.5" height="4.3" rx="0.5" fill="#b9d2ee" stroke="#8a8a8a" stroke-width="0.9"/><path d="M16 8.2 V12.5" stroke="#9ab5d5" stroke-width="0.8"/><path d="M3.6 10.4 H8.2" stroke="#3a7ac7" stroke-width="1.4"/><path d="M5.6 8 L3.2 10.4 L5.6 12.8" fill="none" stroke="#3a7ac7" stroke-width="1.4"/></svg>
<svg style="position:absolute;left:774px;top:52px;" width="26" height="26" viewBox="0 0 26 26"><path d="M2.1 2 H12.9 V6.4 H2.1 Z M7.5 2 V6.4 M2.1 15.2 H12.9 V22.7 H2.1 Z M7.5 15.2 V22.7 M2.1 19 H12.9" fill="#fff" stroke="#7a7a7a" stroke-width="0.9"/><rect x="6.3" y="8.3" width="8.4" height="4.1" rx="0.5" fill="#b9d2ee" stroke="#8a8a8a" stroke-width="0.9"/><path d="M13.2 6.1 L23.5 15.8 M23.5 6.1 L13.2 15.8" stroke="#e0532d" stroke-width="1.5"/></svg>
<svg style="position:absolute;left:805px;top:51px;" width="26" height="27" viewBox="0 0 26 27"><path d="M2.2 1.8 V5.6 M20 1.8 V5.6" stroke="#3a7ac7" stroke-width="0.9"/><path d="M4.2 3.7 H18" stroke="#3a7ac7" stroke-width="0.9"/><path d="M6 2.2 L4.2 3.7 L6 5.2 M16.2 2.2 L18 3.7 L16.2 5.2" fill="none" stroke="#3a7ac7" stroke-width="1.3"/><path d="M2.4 7.1 H23.1 V24 H2.4 Z" fill="#fff" stroke="#7a7a7a" stroke-width="0.9"/><path d="M2.4 10.25 H23.1 M2.4 18.4 H23.1 M8.1 7.1 V24 M14 7.1 V24 M19.4 7.1 V24" stroke="#c6c6c6" stroke-width="0.9"/><rect x="8.1" y="11.2" width="5.9" height="6.5" fill="#3a7ac7"/><path d="M2.4 24 Q2.4 25.4 4 25.4 H8 Q9.3 25.4 9.3 24 Q9.3 25.4 11 25.4 H15 L17.5 23.8" fill="none" stroke="#7a7a7a" stroke-width="0.9"/><rect x="1.8" y="23.9" width="22" height="1.5" fill="#f3f3f3"/></svg>
<svg style="position:absolute;left:751.5px;top:93px;" width="7" height="6" viewBox="0 0 7 6"><polygon points="1,2 5.1,2 3.05,4" fill="#555"/></svg>
<svg style="position:absolute;left:782.75px;top:93px;" width="7" height="6" viewBox="0 0 7 6"><polygon points="1,2 5.1,2 3.05,4" fill="#555"/></svg>
<svg style="position:absolute;left:815.25px;top:93px;" width="7" height="6" viewBox="0 0 7 6"><polygon points="1,2 5.1,2 3.05,4" fill="#555"/></svg>
<svg style="position:absolute;left:841px;top:50px;" width="16" height="16" viewBox="0 0 16 16"><path d="M2.6 2.9 H13.7 V4.4 H5.3 L9.9 8.2 L5.3 12.1 H13.7 V13.6 H2.6 V12.3 L7.5 8.2 L2.6 4.1 Z" fill="#444"/></svg>
<svg style="position:absolute;left:903px;top:57px;" width="6" height="5" viewBox="0 0 6 5"><polygon points="0.3,1.6 3.5,1.6 1.9,3.2" fill="#555"/></svg>
<svg style="position:absolute;left:842px;top:68px;" width="14" height="16" viewBox="0 0 14 16"><rect x="2.4" y="2.5" width="10" height="11.2" fill="#fff" stroke="#6b6b6b" stroke-width="1"/><rect x="2.4" y="2.5" width="10" height="1.8" fill="#6b6b6b"/><path d="M7.4 5.6 V11" stroke="#3a7ac7" stroke-width="1.4"/><path d="M4.8 8.6 L7.4 11.2 L10 8.6" fill="none" stroke="#3a7ac7" stroke-width="1.4"/></svg>
<svg style="position:absolute;left:870.5px;top:73px;" width="7" height="5" viewBox="0 0 7 5"><polygon points="1,2 5,2 3,3.8" fill="#555"/></svg>
<svg style="position:absolute;left:842px;top:86px;" width="14" height="13" viewBox="0 0 14 13"><path d="M2.5 8.9 L9 2.4 Q9.6 1.8 10.2 2.4 L12.3 4.5 Q12.9 5.1 12.3 5.7 L5.8 12.2 Q5.2 12.8 4.6 12.2 L2.5 10.1 Q1.9 9.5 2.5 8.9 Z" fill="#e8758a"/><path d="M4.1 7.3 L7.6 10.8" stroke="#f3f3f3" stroke-width="0.8"/></svg>
<svg style="position:absolute;left:879.5px;top:91px;" width="7" height="5" viewBox="0 0 7 5"><polygon points="1,2 5,2 3,3.8" fill="#555"/></svg>
<svg style="position:absolute;left:912px;top:52px;" width="28" height="24" viewBox="0 0 28 24"><text x="2.4" y="11.5" font-family="Liberation Sans" font-weight="bold" font-size="11.4" fill="#3a7ac7">A</text><path d="M3.8 13.9 H9.6 L4.2 21 H10.4" fill="none" stroke="#8e4fc1" stroke-width="1.55"/><path d="M11.8 8.6 H24 L19.2 13.7 V18.6 H17.7 V13.7 Z" fill="#6b6b6b"/><path d="M13.6 9.4 L17.7 13.2" stroke="#f3f3f3" stroke-width="0.7"/></svg>
<svg style="position:absolute;left:945px;top:52px;" width="26" height="24" viewBox="0 0 26 24"><circle cx="15.2" cy="9.4" r="6.3" fill="#fff" stroke="#3a7ac7" stroke-width="1.6"/><path d="M10.6 14 L4.2 20.4" stroke="#3a7ac7" stroke-width="2.4" stroke-linecap="round"/></svg>
<svg style="position:absolute;left:933.5px;top:94.2px;" width="7" height="5" viewBox="0 0 7 5"><polygon points="1,1.5 5,1.5 3,3.5" fill="#555"/></svg>
<svg style="position:absolute;left:967.5px;top:94.2px;" width="7" height="5" viewBox="0 0 7 5"><polygon points="1,1.5 5,1.5 3,3.5" fill="#555"/></svg>
<svg style="position:absolute;left:1007px;top:106px;" width="12" height="10" viewBox="0 0 12 10"><path d="M2.8 6.8 L5.9 3.7 L9 6.8" fill="none" stroke="#555" stroke-width="1.2"/></svg>
<svg style="position:absolute;left:68px;top:131px;" width="8" height="6" viewBox="0 0 8 6"><polygon points="2,2 6.6,2 4.3,4.6" fill="#555"/></svg>
<svg style="position:absolute;left:89px;top:129px;" width="5" height="12" viewBox="0 0 5 12"><rect x="2" y="2" width="1" height="1.2" fill="#9a9a9a"/><rect x="2" y="5.4" width="1" height="1.2" fill="#9a9a9a"/><rect x="2" y="8.8" width="1" height="1.2" fill="#9a9a9a"/></svg>
<svg style="position:absolute;left:110px;top:129px;" width="14" height="12" viewBox="0 0 14 12"><path d="M3 2.5 L11 10 M11 2.5 L3 10" stroke="#b4b4b4" stroke-width="1"/></svg>
<svg style="position:absolute;left:137px;top:129px;" width="15" height="12" viewBox="0 0 15 12"><path d="M2.4 6.4 L6 10 L12.4 2.4" fill="none" stroke="#b4b4b4" stroke-width="1.1"/></svg>
<svg style="position:absolute;left:164px;top:128px;" width="14" height="14" viewBox="0 0 14 14"><text x="2" y="10.4" font-family="Liberation Serif" font-style="italic" font-size="10.5" fill="#444">f</text><text x="6.2" y="11" font-family="Liberation Serif" font-style="italic" font-size="7.6" fill="#444">x</text></svg>
<svg style="position:absolute;left:1008px;top:130px;" width="12" height="8" viewBox="0 0 12 8"><path d="M3.2 2.8 L6 5.6 L8.8 2.8" fill="none" stroke="#555" stroke-width="1.2"/></svg>
<svg style="position:absolute;left:816px;top:560px;" width="14" height="14" viewBox="0 0 14 14"><g fill="none" stroke="#888" stroke-width="0.9"><rect x="2.4" y="2.5" width="10" height="9.4"/><path d="M2.4 5.6 H12.4 M2.4 8.8 H12.4 M5.7 2.5 V11.9 M9 2.5 V11.9"/></g></svg>
<svg style="position:absolute;left:845px;top:560px;" width="14" height="14" viewBox="0 0 14 14"><g fill="none" stroke="#666" stroke-width="0.9"><rect x="2.2" y="2.5" width="10.6" height="9.4"/><rect x="4.6" y="4.4" width="5.8" height="5.6"/></g><rect x="4.6" y="6.2" width="4" height="1" fill="#666"/></svg>
<svg style="position:absolute;left:874px;top:560px;" width="14" height="14" viewBox="0 0 14 14"><g fill="none" stroke="#666" stroke-width="0.9"><rect x="1.8" y="2.5" width="10.6" height="9.4"/><path d="M1.8 7.6 H8.2 V2.5 M5 2.5 V7.6"/></g></svg>
<div style="position:absolute;left:899px;top:566px;width:4px;height:2px;background:#555"></div>
<div style="position:absolute;left:906px;top:567px;width:75px;height:1px;background:#999"></div>
<div style="position:absolute;left:942px;top:562px;width:4px;height:9px;background:#6b6b6b"></div>
<svg style="position:absolute;left:983px;top:563px;" width="8" height="8" viewBox="0 0 8 8"><path d="M0.8 4 H6.2 M3.5 1.3 V6.7" stroke="#555" stroke-width="1.3"/></svg>
<div class="t" id="t0" style="left:353.08px;top:8.00px;font-size:10.4px;line-height:10.4px;color:#ffffff;font-weight:normal;transform:scaleX(0.8304);">ACC 3010 proj 2 Fall 2018 Version 1 color coded-1</div>
<div class="t" id="t1" style="left:552.70px;top:8.00px;font-size:10.4px;line-height:10.4px;color:#ffffff;font-weight:normal;transform:scaleX(0.8961);">[Compatibility Mode]</div>
<div class="t" id="t2" style="left:650.00px;top:8.00px;font-size:10.4px;line-height:10.4px;color:#ffffff;font-weight:normal;transform:scaleX(0.7192);">Excel</div>
<div class="t" id="t3" style="left:819.37px;top:8.00px;font-size:10.4px;line-height:10.4px;color:#ffffff;font-weight:normal;transform:scaleX(0.8635);">Stefanie Mihoc</div>
<div class="t" id="t4" style="left:16.00px;top:33.00px;font-size:10.4px;line-height:10.4px;color:#ffffff;font-weight:normal;transform:scaleX(0.7859);">File</div>
<div class="t" id="t5" style="left:102.00px;top:33.00px;font-size:10.4px;line-height:10.4px;color:#ffffff;font-weight:normal;transform:scaleX(0.8355);">Insert</div>
<div class="t" id="t6" style="left:146.00px;top:33.00px;font-size:10.4px;line-height:10.4px;color:#ffffff;font-weight:normal;transform:scaleX(0.8318);">Draw</div>
<div class="t" id="t7" style="left:187.92px;top:33.00px;font-size:10.4px;line-height:10.4px;color:#ffffff;font-weight:normal;transform:scaleX(0.8323);">Page Layout</div>
<div class="t" id="t8" style="left:257.92px;top:33.00px;font-size:10.4px;line-height:10.4px;color:#ffffff;font-weight:normal;transform:scaleX(0.8533);">Formulas</div>
<div class="t" id="t9" style="left:316.47px;top:33.00px;font-size:10.4px;line-height:10.4px;color:#ffffff;font-weight:normal;transform:scaleX(0.8359);">Data</div>
<div class="t" id="t10" style="left:355.70px;top:33.00px;font-size:10.4px;line-height:10.4px;color:#ffffff;font-weight:normal;transform:scaleX(0.8215);">Review</div>
<div class="t" id="t11" style="left:405.59px;top:33.00px;font-size:10.4px;line-height:10.4px;color:#ffffff;font-weight:normal;transform:scaleX(0.8464);">View</div>
<div class="t" id="t12" style="left:458.23px;top:33.00px;font-size:10.4px;line-height:10.4px;color:#ffffff;font-weight:normal;transform:scaleX(0.8860);">Tell me what you want to do</div>
<div class="t" id="t13" style="left:995.98px;top:33.00px;font-size:10.4px;line-height:10.4px;color:#ffffff;font-weight:normal;transform:scaleX(0.8180);">Share</div>
<div class="t" id="t14" style="left:55.71px;top:33.00px;font-size:10.4px;line-height:10.4px;color:#217346;font-weight:normal;transform:scaleX(0.8937);">Home</div>
<div class="t" id="t15" style="left:8.46px;top:80.00px;font-size:10.6px;line-height:10.6px;color:#262626;font-weight:normal;transform:scaleX(0.7637);">Paste</div>
<div class="t" id="t16" style="left:52.00px;top:54.00px;font-size:10.6px;line-height:10.6px;color:#262626;font-weight:normal;transform:scaleX(0.7982);">Cut</div>
<div class="t" id="t17" style="left:51.45px;top:71.00px;font-size:10.6px;line-height:10.6px;color:#262626;font-weight:normal;transform:scaleX(0.8420);">Copy</div>
<div class="t" id="t18" style="left:51.00px;top:89.00px;font-size:10.6px;line-height:10.6px;color:#262626;font-weight:normal;transform:scaleX(0.8338);">Format Painter</div>
<div class="t" id="t19" style="left:34.29px;top:107.00px;font-size:9.6px;line-height:9.6px;color:#262626;font-weight:normal;transform:scaleX(0.9084);">Clipboard</div>
<div class="t" id="t20" style="left:181.30px;top:107.00px;font-size:9.6px;line-height:9.6px;color:#262626;font-weight:normal;transform:scaleX(0.9137);">Font</div>
<div class="t" id="t21" style="left:413.73px;top:60.00px;font-size:10.6px;line-height:10.6px;color:#262626;font-weight:normal;transform:scaleX(0.8127);">Wrap Text</div>
<div class="t" id="t22" style="left:413.50px;top:84.00px;font-size:10.6px;line-height:10.6px;color:#262626;font-weight:normal;transform:scaleX(0.8458);">Merge &amp; Center</div>
<div class="t" id="t23" style="left:358.41px;top:107.00px;font-size:9.6px;line-height:9.6px;color:#262626;font-weight:normal;transform:scaleX(0.9415);">Alignment</div>
<div class="t" id="t24" style="left:526.00px;top:107.00px;font-size:9.6px;line-height:9.6px;color:#262626;font-weight:normal;transform:scaleX(0.9067);">Number</div>
<div class="t" id="t25" style="left:606.86px;top:80.00px;font-size:10.6px;line-height:10.6px;color:#262626;font-weight:normal;transform:scaleX(0.8710);">Conditional</div>
<div class="t" id="t26" style="left:605.69px;top:92.00px;font-size:10.6px;line-height:10.6px;color:#262626;font-weight:normal;transform:scaleX(0.8445);">Formatting</div>
<div class="t" id="t27" style="left:658.76px;top:80.00px;font-size:10.6px;line-height:10.6px;color:#262626;font-weight:normal;transform:scaleX(0.8091);">Format as</div>
<div class="t" id="t28" style="left:665.35px;top:92.00px;font-size:10.6px;line-height:10.6px;color:#262626;font-weight:normal;transform:scaleX(0.8494);">Table</div>
<div class="t" id="t29" style="left:708.09px;top:80.00px;font-size:10.6px;line-height:10.6px;color:#262626;font-weight:normal;transform:scaleX(0.8215);">Cell</div>
<div class="t" id="t30" style="left:701.90px;top:92.00px;font-size:10.6px;line-height:10.6px;color:#262626;font-weight:normal;transform:scaleX(0.7808);">Styles</div>
<div class="t" id="t31" style="left:656.78px;top:107.00px;font-size:9.6px;line-height:9.6px;color:#262626;font-weight:normal;transform:scaleX(0.8220);">Styles</div>
<div class="t" id="t32" style="left:743.26px;top:80.00px;font-size:10.6px;line-height:10.6px;color:#262626;font-weight:normal;transform:scaleX(0.8226);">Insert</div>
<div class="t" id="t33" style="left:774.00px;top:80.00px;font-size:10.6px;line-height:10.6px;color:#262626;font-weight:normal;transform:scaleX(0.8106);">Delete</div>
<div class="t" id="t34" style="left:803.66px;top:80.00px;font-size:10.6px;line-height:10.6px;color:#262626;font-weight:normal;transform:scaleX(0.8510);">Format</div>
<div class="t" id="t35" style="left:777.50px;top:107.00px;font-size:9.6px;line-height:9.6px;color:#262626;font-weight:normal;transform:scaleX(0.8226);">Cells</div>
<div class="t" id="t36" style="left:857.24px;top:54.00px;font-size:10.6px;line-height:10.6px;color:#262626;font-weight:normal;transform:scaleX(0.8642);">AutoSum</div>
<div class="t" id="t37" style="left:857.59px;top:72.00px;font-size:10.6px;line-height:10.6px;color:#262626;font-weight:normal;transform:scaleX(0.7794);">Fill</div>
<div class="t" id="t38" style="left:858.00px;top:89.00px;font-size:10.6px;line-height:10.6px;color:#262626;font-weight:normal;transform:scaleX(0.8271);">Clear</div>
<div class="t" id="t39" style="left:912.90px;top:80.00px;font-size:10.6px;line-height:10.6px;color:#262626;font-weight:normal;transform:scaleX(0.8650);">Sort &amp;</div>
<div class="t" id="t40" style="left:913.56px;top:92.00px;font-size:10.6px;line-height:10.6px;color:#262626;font-weight:normal;transform:scaleX(0.8121);">Filter</div>
<div class="t" id="t41" style="left:945.00px;top:80.00px;font-size:10.6px;line-height:10.6px;color:#262626;font-weight:normal;transform:scaleX(0.8908);">Find &amp;</div>
<div class="t" id="t42" style="left:942.76px;top:92.00px;font-size:10.6px;line-height:10.6px;color:#262626;font-weight:normal;transform:scaleX(0.7963);">Select</div>
<div class="t" id="t43" style="left:893.90px;top:107.00px;font-size:9.6px;line-height:9.6px;color:#262626;font-weight:normal;transform:scaleX(0.9362);">Editing</div>
<div class="t" id="t44" style="left:123.95px;top:61.00px;font-size:10.2px;line-height:10.2px;color:#444;font-weight:normal;transform:scaleX(0.8705);">Calibri</div>
<div class="t" id="t45" style="left:206.72px;top:61.00px;font-size:10.2px;line-height:10.2px;color:#444;font-weight:normal;transform:scaleX(0.8362);">11</div>
<div class="t" id="t46" style="left:500.95px;top:61.00px;font-size:10.2px;line-height:10.2px;color:#444;font-weight:normal;transform:scaleX(0.8170);">General</div>
<div class="t" id="t47" style="left:9.04px;top:132.00px;font-size:10.4px;line-height:10.4px;color:#333;font-weight:normal;transform:scaleX(0.9861);">A47</div>
<div class="t" id="t48" style="left:20.00px;top:157.00px;font-size:10.2px;line-height:10.2px;color:#217346;font-weight:normal;width:53px;text-align:center;">A</div>
<div class="t" id="t49" style="left:74.00px;top:157.00px;font-size:10.2px;line-height:10.2px;color:#444;font-weight:normal;width:60px;text-align:center;">B</div>
<div class="t" id="t50" style="left:135.00px;top:157.00px;font-size:10.2px;line-height:10.2px;color:#444;font-weight:normal;width:78px;text-align:center;">C</div>
<div class="t" id="t51" style="left:214.00px;top:157.00px;font-size:10.2px;line-height:10.2px;color:#444;font-weight:normal;width:74px;text-align:center;">D</div>
<div class="t" id="t52" style="left:289.00px;top:157.00px;font-size:10.2px;line-height:10.2px;color:#444;font-weight:normal;width:54px;text-align:center;">E</div>
<div class="t" id="t53" style="left:344.00px;top:157.00px;font-size:10.2px;line-height:10.2px;color:#444;font-weight:normal;width:47px;text-align:center;">F</div>
<div class="t" id="t54" style="left:392.00px;top:157.00px;font-size:10.2px;line-height:10.2px;color:#444;font-weight:normal;width:47px;text-align:center;">G</div>
<div class="t" id="t55" style="left:440.00px;top:157.00px;font-size:10.2px;line-height:10.2px;color:#444;font-weight:normal;width:28px;text-align:center;">H</div>
<div class="t" id="t56" style="left:469.00px;top:157.00px;font-size:10.2px;line-height:10.2px;color:#444;font-weight:normal;width:47px;text-align:center;">I</div>
<div class="t" id="t57" style="left:517.00px;top:157.00px;font-size:10.2px;line-height:10.2px;color:#444;font-weight:normal;width:47px;text-align:center;">J</div>
<div class="t" id="t58" style="left:565.00px;top:157.00px;font-size:10.2px;line-height:10.2px;color:#444;font-weight:normal;width:47px;text-align:center;">K</div>
<div class="t" id="t59" style="left:613.00px;top:157.00px;font-size:10.2px;line-height:10.2px;color:#444;font-weight:normal;width:47px;text-align:center;">L</div>
<div class="t" id="t60" style="left:661.00px;top:157.00px;font-size:10.2px;line-height:10.2px;color:#444;font-weight:normal;width:47px;text-align:center;">M</div>
<div class="t" id="t61" style="left:709.00px;top:157.00px;font-size:10.2px;line-height:10.2px;color:#444;font-weight:normal;width:47px;text-align:center;">N</div>
<div class="t" id="t62" style="left:757.00px;top:157.00px;font-size:10.2px;line-height:10.2px;color:#444;font-weight:normal;width:47px;text-align:center;">O</div>
<div class="t" id="t63" style="left:805.00px;top:157.00px;font-size:10.2px;line-height:10.2px;color:#444;font-weight:normal;width:47px;text-align:center;">P</div>
<div class="t" id="t64" style="left:853.00px;top:157.00px;font-size:10.2px;line-height:10.2px;color:#444;font-weight:normal;width:47px;text-align:center;">Q</div>
<div class="t" id="t65" style="left:901.00px;top:157.00px;font-size:10.2px;line-height:10.2px;color:#444;font-weight:normal;width:47px;text-align:center;">R</div>
<div class="t" id="t66" style="left:949.00px;top:157.00px;font-size:10.2px;line-height:10.2px;color:#444;font-weight:normal;width:47px;text-align:center;">S</div>
<div class="t" id="t67" style="left:0.00px;top:175.00px;font-size:10.4px;line-height:10.4px;color:#444;font-weight:normal;width:19px;text-align:center;">1</div>
<div class="t" id="t68" style="left:0.00px;top:190.00px;font-size:10.4px;line-height:10.4px;color:#444;font-weight:normal;width:19px;text-align:center;">2</div>
<div class="t" id="t69" style="left:0.00px;top:205.00px;font-size:10.4px;line-height:10.4px;color:#444;font-weight:normal;width:19px;text-align:center;">3</div>
<div class="t" id="t70" style="left:0.00px;top:220.00px;font-size:10.4px;line-height:10.4px;color:#444;font-weight:normal;width:19px;text-align:center;">4</div>
<div class="t" id="t71" style="left:0.00px;top:235.00px;font-size:10.4px;line-height:10.4px;color:#444;font-weight:normal;width:19px;text-align:center;">5</div>
<div class="t" id="t72" style="left:0.00px;top:250.00px;font-size:10.4px;line-height:10.4px;color:#444;font-weight:normal;width:19px;text-align:center;">6</div>
<div class="t" id="t73" style="left:0.00px;top:265.00px;font-size:10.4px;line-height:10.4px;color:#444;font-weight:normal;width:19px;text-align:center;">7</div>
<div class="t" id="t74" style="left:0.00px;top:280.00px;font-size:10.4px;line-height:10.4px;color:#444;font-weight:normal;width:19px;text-align:center;">8</div>
<div class="t" id="t75" style="left:0.00px;top:295.00px;font-size:10.4px;line-height:10.4px;color:#444;font-weight:normal;width:19px;text-align:center;">9</div>
<div class="t" id="t76" style="left:0.00px;top:310.00px;font-size:10.4px;line-height:10.4px;color:#444;font-weight:normal;width:19px;text-align:center;">10</div>
<div class="t" id="t77" style="left:0.00px;top:325.00px;font-size:10.4px;line-height:10.4px;color:#444;font-weight:normal;width:19px;text-align:center;">11</div>
<div class="t" id="t78" style="left:0.00px;top:340.00px;font-size:10.4px;line-height:10.4px;color:#444;font-weight:normal;width:19px;text-align:center;">12</div>
<div class="t" id="t79" style="left:0.00px;top:355.00px;font-size:10.4px;line-height:10.4px;color:#444;font-weight:normal;width:19px;text-align:center;">13</div>
<div class="t" id="t80" style="left:0.00px;top:370.00px;font-size:10.4px;line-height:10.4px;color:#444;font-weight:normal;width:19px;text-align:center;">14</div>
<div class="t" id="t81" style="left:0.00px;top:385.00px;font-size:10.4px;line-height:10.4px;color:#444;font-weight:normal;width:19px;text-align:center;">15</div>
<div class="t" id="t82" style="left:0.00px;top:400.00px;font-size:10.4px;line-height:10.4px;color:#444;font-weight:normal;width:19px;text-align:center;">16</div>
<div class="t" id="t83" style="left:0.00px;top:415.00px;font-size:10.4px;line-height:10.4px;color:#444;font-weight:normal;width:19px;text-align:center;">17</div>
<div class="t" id="t84" style="left:0.00px;top:430.00px;font-size:10.4px;line-height:10.4px;color:#444;font-weight:normal;width:19px;text-align:center;">18</div>
<div class="t" id="t85" style="left:0.00px;top:445.00px;font-size:10.4px;line-height:10.4px;color:#444;font-weight:normal;width:19px;text-align:center;">19</div>
<div class="t" id="t86" style="left:0.00px;top:460.00px;font-size:10.4px;line-height:10.4px;color:#444;font-weight:normal;width:19px;text-align:center;">20</div>
<div class="t" id="t87" style="left:0.00px;top:475.00px;font-size:10.4px;line-height:10.4px;color:#444;font-weight:normal;width:19px;text-align:center;">21</div>
<div class="t" id="t88" style="left:0.00px;top:490.00px;font-size:10.4px;line-height:10.4px;color:#444;font-weight:normal;width:19px;text-align:center;">22</div>
<div class="t" id="t89" style="left:0.00px;top:505.00px;font-size:10.4px;line-height:10.4px;color:#444;font-weight:normal;width:19px;text-align:center;">23</div>
<div class="t" id="t90" style="left:0.00px;top:520.00px;font-size:10.4px;line-height:10.4px;color:#444;font-weight:normal;width:19px;text-align:center;">24</div>
<div class="t" id="t91" style="left:0.00px;top:535.00px;font-size:10.4px;line-height:10.4px;color:#444;font-weight:normal;width:19px;text-align:center;overflow:hidden;height:3.00px;">25</div>
<div class="t" id="t92" style="left:21.07px;top:170.00px;font-size:14.7px;line-height:14.7px;color:#000;font-weight:bold;">June Journal Entries</div>
<div class="t" id="t93" style="left:88.00px;top:544.00px;font-size:10.2px;line-height:10.2px;color:#444;font-weight:normal;transform:scaleX(0.9775);">Project Information</div>
<div class="t" id="t94" style="left:196.28px;top:544.00px;font-size:10.2px;line-height:10.2px;color:#222;font-weight:normal;transform:scaleX(0.9475);">Purchase Sales information</div>
<div class="t" id="t95" style="left:337.00px;top:544.00px;font-size:10.2px;line-height:10.2px;color:#222;font-weight:normal;transform:scaleX(0.9454);">inv cards</div>
<div class="t" id="t96" style="left:396.00px;top:544.00px;font-size:10.2px;line-height:10.2px;color:#217346;font-weight:bold;transform:scaleX(0.9129);">jes</div>
<div class="t" id="t97" style="left:427.40px;top:544.00px;font-size:10.2px;line-height:10.2px;color:#444;font-weight:normal;transform:scaleX(0.9479);">worksheet</div>
<div class="t" id="t98" style="left:496.91px;top:544.00px;font-size:10.2px;line-height:10.2px;color:#222;font-weight:normal;transform:scaleX(0.9581);">bank rec info</div>
<div class="t" id="t99" style="left:6.44px;top:562.00px;font-size:9.6px;line-height:9.6px;color:#444;font-weight:normal;transform:scaleX(0.8205);">Ready</div>
<div class="t" id="t100" style="left:998.04px;top:562.00px;font-size:9.6px;line-height:9.6px;color:#444;font-weight:normal;transform:scaleX(0.8049);">100%</div>
<div class="t" id="t101" style="left:241.14px;top:62.00px;font-size:10.4px;line-height:10.4px;color:#444;font-weight:bold;transform:scaleX(1.0748);">A</div>
<div class="t" id="t102" style="left:257.95px;top:62.00px;font-size:8.4px;line-height:8.4px;color:#444;font-weight:bold;transform:scaleX(1.0729);">A</div>
<div class="t" id="t103" style="left:126.54px;top:84.00px;font-size:10.4px;line-height:10.4px;color:#333;font-weight:bold;transform:scaleX(0.7425);">B</div>
<div class="t" id="t104" style="left:158.87px;top:84.00px;font-size:10.4px;line-height:10.4px;color:#444;font-weight:bold;transform:scaleX(0.8481);">U</div>
<div class="t" id="t105" style="left:248.81px;top:83.00px;font-size:10.6px;line-height:10.6px;color:#444;font-weight:bold;transform:scaleX(1.0675);">A</div>
<div class="t" id="t106" style="left:504.00px;top:83.00px;font-size:11.5px;line-height:11.5px;color:#555;font-weight:normal;transform:scaleX(0.9928);">$</div>
<div class="t" id="t107" style="left:527.90px;top:84.00px;font-size:10.6px;line-height:10.6px;color:#555;font-weight:normal;transform:scaleX(1.0381);">%</div>
</body></html>
